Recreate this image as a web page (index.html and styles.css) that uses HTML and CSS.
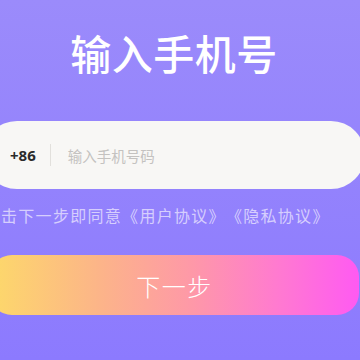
FILE: index.html
```html
<!DOCTYPE html>
<html lang="zh">
<head>
<meta charset="utf-8">
<link rel="stylesheet" href="styles.css">
</head>
<body>
<div class="page">
  <h1 class="title">输入手机号</h1>
  <div class="phone-field">
    <span class="prefix">+86</span>
    <span class="divider"></span>
    <span class="placeholder">输入手机号码</span>
  </div>
  <p class="agree">击下一步即同意<span class="link">《用户协议》</span><span class="link gap">《隐私协议》</span></p>
  <div class="next-btn">下一步</div>
</div>
</body>
</html>
```
FILE: styles.css
```css
html, body {
  margin: 0;
  padding: 0;
  width: 360px;
  height: 360px;
  overflow: hidden;
}
body {
  background: linear-gradient(180deg, #9b8bfb 0%, #8c7afe 100%);
  font-family: "Noto Sans CJK SC", "Noto Sans", sans-serif;
}
.page {
  width: 382px;
  margin-left: -17px;
  display: flex;
  flex-direction: column;
}
.title {
  margin: 0;
  padding-top: 32px;
  font-size: 41px;
  line-height: 40px;
  font-weight: 500;
  color: #ffffff;
  text-align: center;
  letter-spacing: 0.5px;
}
.phone-field {
  margin-top: 49px;
  height: 68px;
  border-radius: 34px;
  background: #f8f7f5;
  display: flex;
  align-items: center;
  padding-left: 27px;
}
.prefix {
  font-family: "Noto Sans", sans-serif;
  font-weight: 700;
  font-size: 15px;
  color: #2b2b2b;
}
.divider {
  width: 1px;
  height: 22px;
  background: #e2e0dc;
  margin-left: 14px;
  margin-right: 17px;
}
.placeholder {
  font-size: 14.5px;
  color: #c4c2c0;
}
.agree {
  margin: 14px 0 0 18px;
  font-size: 16px;
  line-height: 24px;
  letter-spacing: 1.3px;
  color: #d6cefd;
  white-space: nowrap;
}
.gap {
  margin-left: 8px;
}
.next-btn {
  margin-top: 28px;
  margin-left: 7px;
  width: 369px;
  height: 60px;
  border-radius: 22px;
  background: linear-gradient(90deg, #fdd96a 0%, #fcb489 30%, #fe98a8 55%, #ff7ad0 78%, #ff5af2 100%);
  color: #ffffff;
  font-size: 24px;
  font-weight: 300;
  display: flex;
  align-items: center;
  justify-content: center;
  letter-spacing: 1.5px;
}
```
